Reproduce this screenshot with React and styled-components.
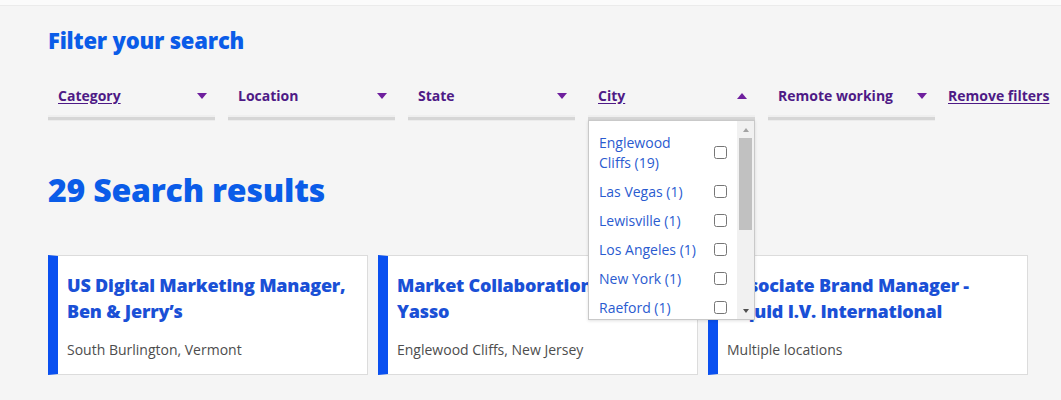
import React from "react";
import styled, { createGlobalStyle } from "styled-components";

const Global = createGlobalStyle`
  html, body { margin: 0; padding: 0; }
  body {
    background: #f5f5f5;
    font-family: "Open Sans", "Noto Sans", sans-serif;
    width: 1061px;
    height: 400px;
    overflow: hidden;
  }
`;

const TopStrip = styled.div`
  height: 5px;
  background: #fbfbfb;
  border-bottom: 1px solid #ebebeb;
`;

const Page = styled.div`
  padding: 20px 0 0 48px;
  display: flex;
  flex-direction: column;
`;

const FilterTitle = styled.h2`
  margin: 0;
  font-size: 22px;
  line-height: 28px;
  font-weight: 800;
  color: #0a5ce8;
  letter-spacing: -0.2px;
`;

const FilterRow = styled.div`
  margin-top: 27px;
  display: flex;
  gap: 13px;
  align-items: flex-start;
`;

const Filter = styled.div`
  position: relative;
  width: 167px;
  display: flex;
  flex-direction: column;
`;

const FilterHead = styled.div`
  height: 28px;
  display: flex;
  align-items: center;
  justify-content: space-between;
  padding: 0 8px 0 10px;
`;

const FilterLabel = styled.span`
  font-size: 14px;
  font-weight: 700;
  color: #4e1a86;
  text-decoration: ${(p) => (p.$active ? "underline" : "none")};
  text-underline-offset: 2px;
`;

const Tri = styled.span`
  width: 0;
  height: 0;
  border-left: 5px solid transparent;
  border-right: 5px solid transparent;
  ${(p) =>
    p.$up
      ? "border-bottom: 6px solid #6f1f9e;"
      : "border-top: 6px solid #6f1f9e;"}
  margin-top: 2px;
`;

const Bar = styled.div`
  margin-top: 6px;
  height: 6px;
  background: linear-gradient(#efefef 0 40%, #d6d6d6 40% 85%, #ececec 85%);
`;

const RemoveLink = styled.a`
  height: 28px;
  display: flex;
  align-items: center;
  font-size: 14px;
  font-weight: 700;
  color: #4e1a86;
  text-decoration: underline;
  text-underline-offset: 2px;
  white-space: nowrap;
`;

const Dropdown = styled.div`
  position: absolute;
  top: calc(100% - 1px);
  left: 0;
  width: 167px;
  height: 200px;
  box-sizing: border-box;
  background: #fff;
  border: 1px solid #c9c9c9;
  box-shadow: 0 1px 3px rgba(0, 0, 0, 0.12);
  display: flex;
  z-index: 10;
`;

const List = styled.div`
  flex: 1;
  overflow: hidden;
  padding: 7px 10px 0 10px;
`;

const Item = styled.label`
  display: flex;
  align-items: center;
  justify-content: space-between;
  gap: 8px;
  padding: 4.5px 0;
  font-size: 14px;
  line-height: 20px;
  color: #2a5bd0;
`;

const ItemText = styled.span`
  max-width: 108px;
`;

const Check = styled.input`
  width: 13px;
  height: 13px;
  margin: 0;
  flex: none;
`;

const Scrollbar = styled.div`
  width: 17px;
  background: #f1f1f1;
  display: flex;
  flex-direction: column;
`;

const ScrollBtn = styled.div`
  height: 17px;
  display: flex;
  align-items: center;
  justify-content: center;
  &::after {
    content: "";
    border-left: 3.5px solid transparent;
    border-right: 3.5px solid transparent;
    ${(p) =>
      p.$up ? "border-bottom: 4px solid #a3a3a3;" : "border-top: 4px solid #505050;"}
  }
`;

const Track = styled.div`
  flex: 1;
  padding: 0 2px;
`;

const Thumb = styled.div`
  height: 92px;
  background: #c1c1c1;
`;

const ResultsTitle = styled.h1`
  margin: 49px 0 0;
  font-size: 32px;
  line-height: 40px;
  font-weight: 800;
  color: #0a5ce8;
  letter-spacing: -0.2px;
`;

const Cards = styled.div`
  margin-top: 45px;
  display: flex;
  gap: 10px;
`;

const Card = styled.div`
  width: 320px;
  height: 120px;
  box-sizing: border-box;
  background: #fff;
  border: 1px solid #dcdcdc;
  border-left: 10px solid #0a50f0;
  padding: 16px 12px 0 9px;
  display: flex;
  flex-direction: column;
`;

const CardTitle = styled.div`
  font-size: 18px;
  line-height: 26px;
  font-weight: 800;
  color: #1a50d6;
  letter-spacing: -0.2px;
`;

const CardPlace = styled.div`
  margin-top: 16px;
  font-size: 14px;
  line-height: 20px;
  color: #4d4d4d;
`;

const filters = [
  { label: "Category", active: true },
  { label: "Location" },
  { label: "State" },
  { label: "City", active: true, open: true },
  { label: "Remote working" },
];

const cities = [
  "Englewood Cliffs (19)",
  "Las Vegas (1)",
  "Lewisville (1)",
  "Los Angeles (1)",
  "New York (1)",
  "Raeford (1)",
  "Richmond (1)",
];

const jobs = [
  { title: "US Digital Marketing Manager, Ben & Jerry’s", place: "South Burlington, Vermont" },
  { title: "Market Collaboration Manager, Yasso", place: "Englewood Cliffs, New Jersey" },
  { title: "Associate Brand Manager - Liquid I.V. International", place: "Multiple locations" },
];

export default function App() {
  return (
    <>
      <Global />
      <TopStrip />
      <Page>
        <FilterTitle>Filter your search</FilterTitle>
        <FilterRow>
          {filters.map((f) => (
            <Filter key={f.label}>
              <FilterHead>
                <FilterLabel $active={f.active}>{f.label}</FilterLabel>
                <Tri $up={f.open} />
              </FilterHead>
              <Bar />
              {f.open && (
                <Dropdown>
                  <List>
                    {cities.map((c) => (
                      <Item key={c}>
                        <ItemText>{c}</ItemText>
                        <Check type="checkbox" />
                      </Item>
                    ))}
                  </List>
                  <Scrollbar>
                    <ScrollBtn $up />
                    <Track>
                      <Thumb />
                    </Track>
                    <ScrollBtn />
                  </Scrollbar>
                </Dropdown>
              )}
            </Filter>
          ))}
          <RemoveLink>Remove filters</RemoveLink>
        </FilterRow>
        <ResultsTitle>29 Search results</ResultsTitle>
        <Cards>
          {jobs.map((j) => (
            <Card key={j.title}>
              <CardTitle>{j.title}</CardTitle>
              <CardPlace>{j.place}</CardPlace>
            </Card>
          ))}
        </Cards>
      </Page>
    </>
  );
}
